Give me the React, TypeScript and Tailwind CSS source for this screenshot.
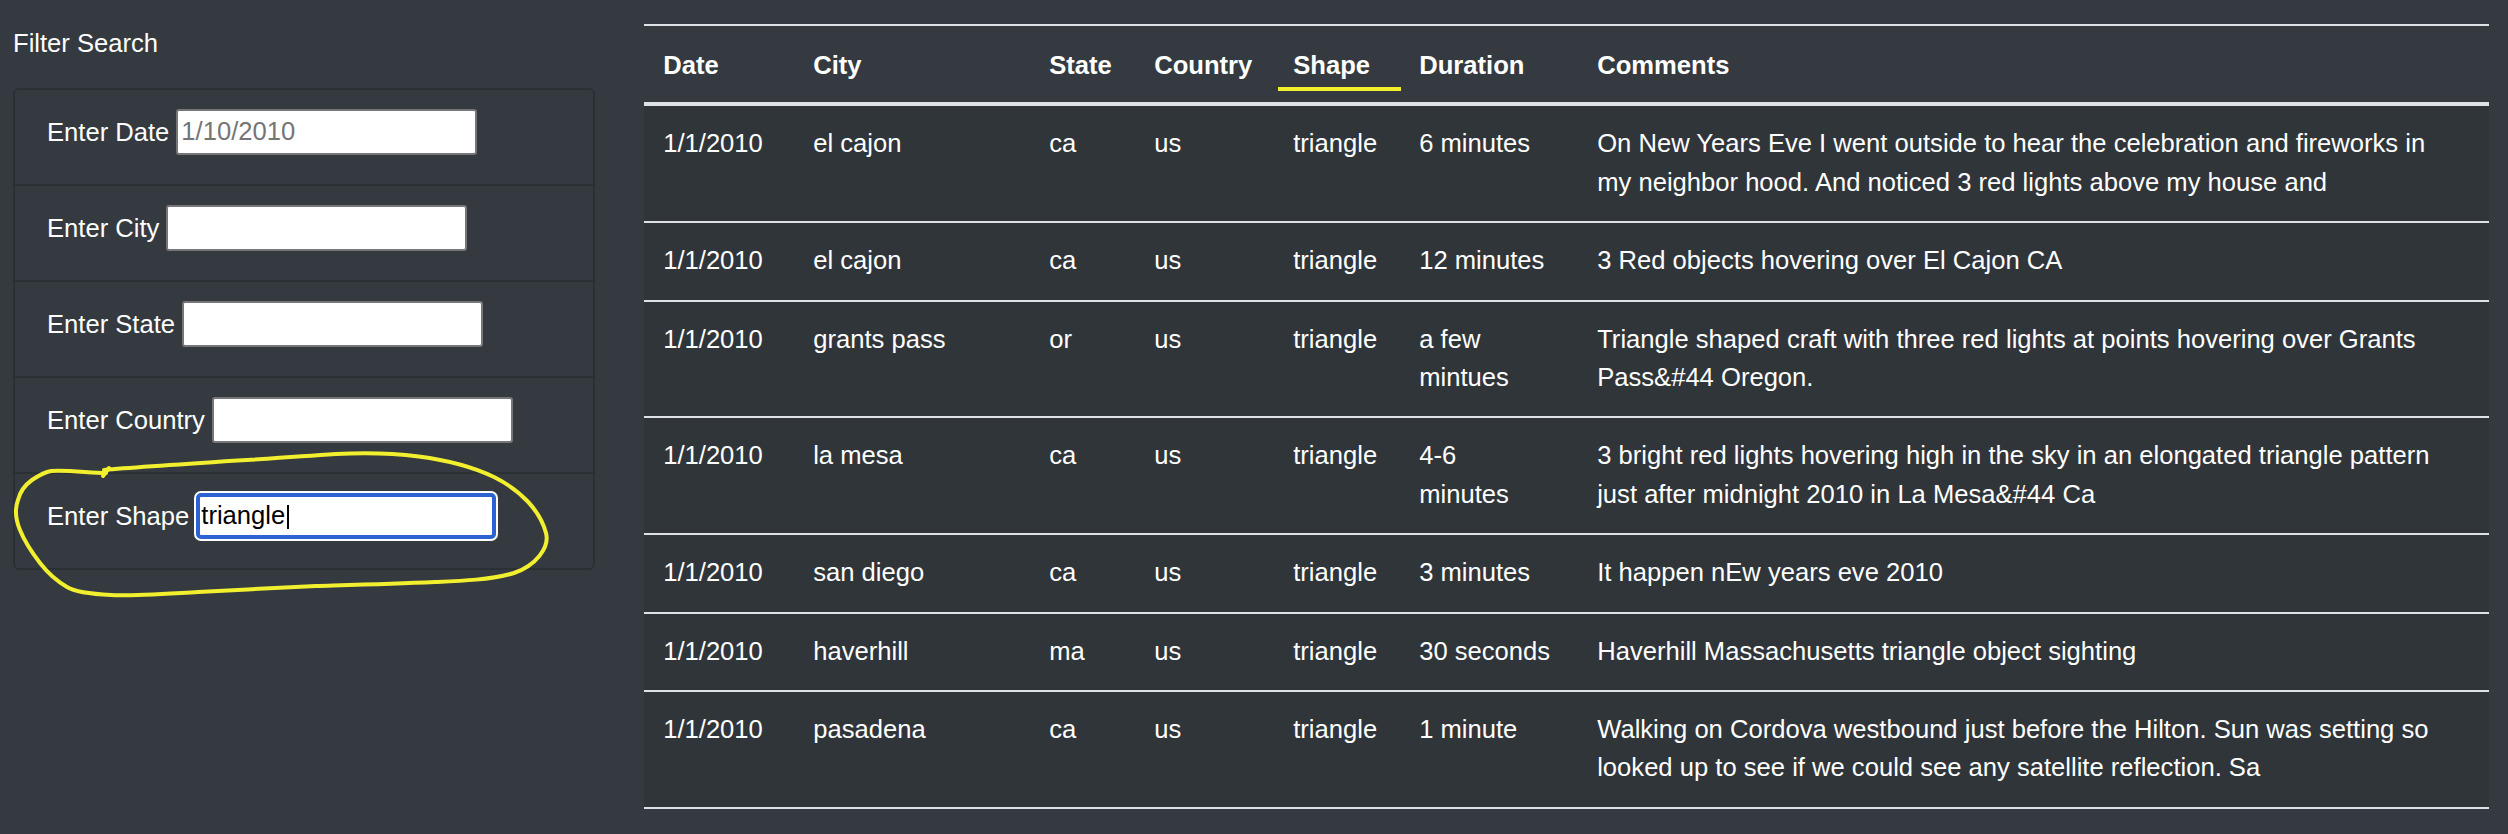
import React from 'react';

type Sighting = {
  date: string;
  city: string;
  state: string;
  country: string;
  shape: string;
  duration: string;
  comments: string;
};

const sightings: Sighting[] = [
  {
    date: '1/1/2010',
    city: 'el cajon',
    state: 'ca',
    country: 'us',
    shape: 'triangle',
    duration: '6 minutes',
    comments:
      'On New Years Eve I went outside to hear the celebration and fireworks in my neighbor hood. And noticed 3 red lights above my house and',
  },
  {
    date: '1/1/2010',
    city: 'el cajon',
    state: 'ca',
    country: 'us',
    shape: 'triangle',
    duration: '12 minutes',
    comments: '3 Red objects hovering over El Cajon CA',
  },
  {
    date: '1/1/2010',
    city: 'grants pass',
    state: 'or',
    country: 'us',
    shape: 'triangle',
    duration: 'a few mintues',
    comments:
      'Triangle shaped craft with three red lights at points hovering over Grants Pass&#44 Oregon.',
  },
  {
    date: '1/1/2010',
    city: 'la mesa',
    state: 'ca',
    country: 'us',
    shape: 'triangle',
    duration: '4-6\nminutes',
    comments:
      '3 bright red lights hovering high in the sky in an elongated triangle pattern just after midnight 2010 in La Mesa&#44 Ca',
  },
  {
    date: '1/1/2010',
    city: 'san diego',
    state: 'ca',
    country: 'us',
    shape: 'triangle',
    duration: '3 minutes',
    comments: 'It happen nEw years eve 2010',
  },
  {
    date: '1/1/2010',
    city: 'haverhill',
    state: 'ma',
    country: 'us',
    shape: 'triangle',
    duration: '30 seconds',
    comments: 'Haverhill Massachusetts triangle object sighting',
  },
  {
    date: '1/1/2010',
    city: 'pasadena',
    state: 'ca',
    country: 'us',
    shape: 'triangle',
    duration: '1 minute',
    comments:
      'Walking on Cordova westbound just before the Hilton. Sun was setting so looked up to see if we could see any satellite reflection. Sa',
  },
];

const FilterRow = ({
  label,
  placeholder,
  first,
}: {
  label: string;
  placeholder?: string;
  first?: boolean;
}) => (
  <li
    className={`px-[32px] pt-[19px] ${first ? 'h-[94px]' : 'h-[96px] border-t-2 border-[#2b3035]'}`}
  >
    <div className="flex items-center gap-[7px] h-[46px]">
      <label className="whitespace-nowrap">{label}</label>
      <input
        type="text"
        placeholder={placeholder}
        className="w-[301px] h-[46px] bg-white text-black border-2 border-[#767676] rounded-[3px] px-[3px] text-[25.6px] placeholder:text-[#757575] outline-none"
      />
    </div>
  </li>
);

const App = () => {
  return (
    <div className="relative min-h-screen bg-[#343a40] text-white font-['Liberation_Sans',Arial,sans-serif] text-[25.6px] leading-[1.5] overflow-hidden">
      <div className="flex pt-[24px]">
        <aside className="w-[644px] shrink-0 pl-[13px]">
          <h5 className="h-[38.4px] font-normal">Filter Search</h5>
          <ul className="mt-[25.6px] w-[582px] border-2 border-[#2b3035] rounded-[6px]">
            <FilterRow label="Enter Date" placeholder="1/10/2010" first />
            <FilterRow label="Enter City" />
            <FilterRow label="Enter State" />
            <FilterRow label="Enter Country" />
            <li className="h-[96px] border-t-2 border-[#2b3035] px-[32px] pt-[19px]">
              <div className="flex items-center gap-[7px] h-[46px]">
                <label className="whitespace-nowrap">Enter Shape</label>
                <span className="relative">
                  <input
                    type="text"
                    defaultValue="triangle"
                    className="block w-[300px] h-[46px] bg-white text-black border-4 border-[#2d62d2] rounded-[5px] px-[1px] text-[25.6px] shadow-[0_0_0_2px_#ffffff] outline-none"
                  />
                  <span className="absolute left-[91px] top-[12px] w-[2px] h-[24px] bg-black" />
                </span>
              </div>
            </li>
          </ul>
        </aside>

        <table className="w-[1845px] table-fixed border-collapse">
          <colgroup>
            <col className="w-[150px]" />
            <col className="w-[236px]" />
            <col className="w-[105px]" />
            <col className="w-[139px]" />
            <col className="w-[126px]" />
            <col className="w-[178px]" />
            <col className="w-[911px]" />
          </colgroup>
          <thead>
            <tr className="border-t-2 border-b-4 border-[#dee2e6]">
              <th className="px-[19.2px] pt-[20px] pb-[18px] text-left font-bold">Date</th>
              <th className="px-[19.2px] pt-[20px] pb-[18px] text-left font-bold">City</th>
              <th className="px-[19.2px] pt-[20px] pb-[18px] text-left font-bold">State</th>
              <th className="px-[19.2px] pt-[20px] pb-[18px] text-left font-bold">Country</th>
              <th className="relative px-[19.2px] pt-[20px] pb-[18px] text-left font-bold">
                Shape
                <span className="absolute left-[4px] top-[61px] w-[123px] h-[4px] bg-[#f4ef2c]" />
              </th>
              <th className="px-[19.2px] pt-[20px] pb-[18px] text-left font-bold">Duration</th>
              <th className="px-[19.2px] pt-[20px] pb-[18px] text-left font-bold">Comments</th>
            </tr>
          </thead>
          <tbody>
            {sightings.map((s, i) => (
              <tr key={i} className="bg-[#30353a] border-b-2 border-[#dee2e6] align-top">
                <td className="px-[19.2px] pt-[18px] pb-[20px]">{s.date}</td>
                <td className="px-[19.2px] pt-[18px] pb-[20px]">{s.city}</td>
                <td className="px-[19.2px] pt-[18px] pb-[20px]">{s.state}</td>
                <td className="px-[19.2px] pt-[18px] pb-[20px]">{s.country}</td>
                <td className="px-[19.2px] pt-[18px] pb-[20px]">{s.shape}</td>
                <td className="px-[19.2px] pt-[18px] pb-[20px] whitespace-pre-line">{s.duration}</td>
                <td className="pl-[19.2px] pr-[30px] pt-[18px] pb-[20px]">{s.comments}</td>
              </tr>
            ))}
          </tbody>
        </table>
      </div>

      {/* hand-drawn highlight around the shape filter */}
      <svg
        className="absolute left-0 top-0 pointer-events-none"
        width="600"
        height="620"
        viewBox="0 0 600 620"
        fill="none"
      >
        <path
          d="M 104 470 C 150 466, 250 460, 336 454 C 390 451, 450 456, 494 477 C 520 490, 540 510, 546 533 C 550 548, 535 566, 514 573 C 490 580, 460 581, 435 582 C 390 584, 350 585, 316 586 C 270 588, 240 590, 198 592 C 160 594, 130 596, 111 595 C 90 594, 75 592, 67 587 C 55 580, 47 572, 40 563 C 30 550, 24 540, 20 530 C 15 518, 15 508, 18 500 C 20 492, 25 485, 32 480 C 38 476, 44 472, 51 471 C 70 470, 90 473, 106 473"
          stroke="#f2ef2e"
          strokeWidth="4"
          strokeLinecap="round"
          strokeLinejoin="round"
        />
        <path d="M 103 476 L 109 468" stroke="#f2ef2e" strokeWidth="4" strokeLinecap="round" />
      </svg>
    </div>
  );
};

export default App;
